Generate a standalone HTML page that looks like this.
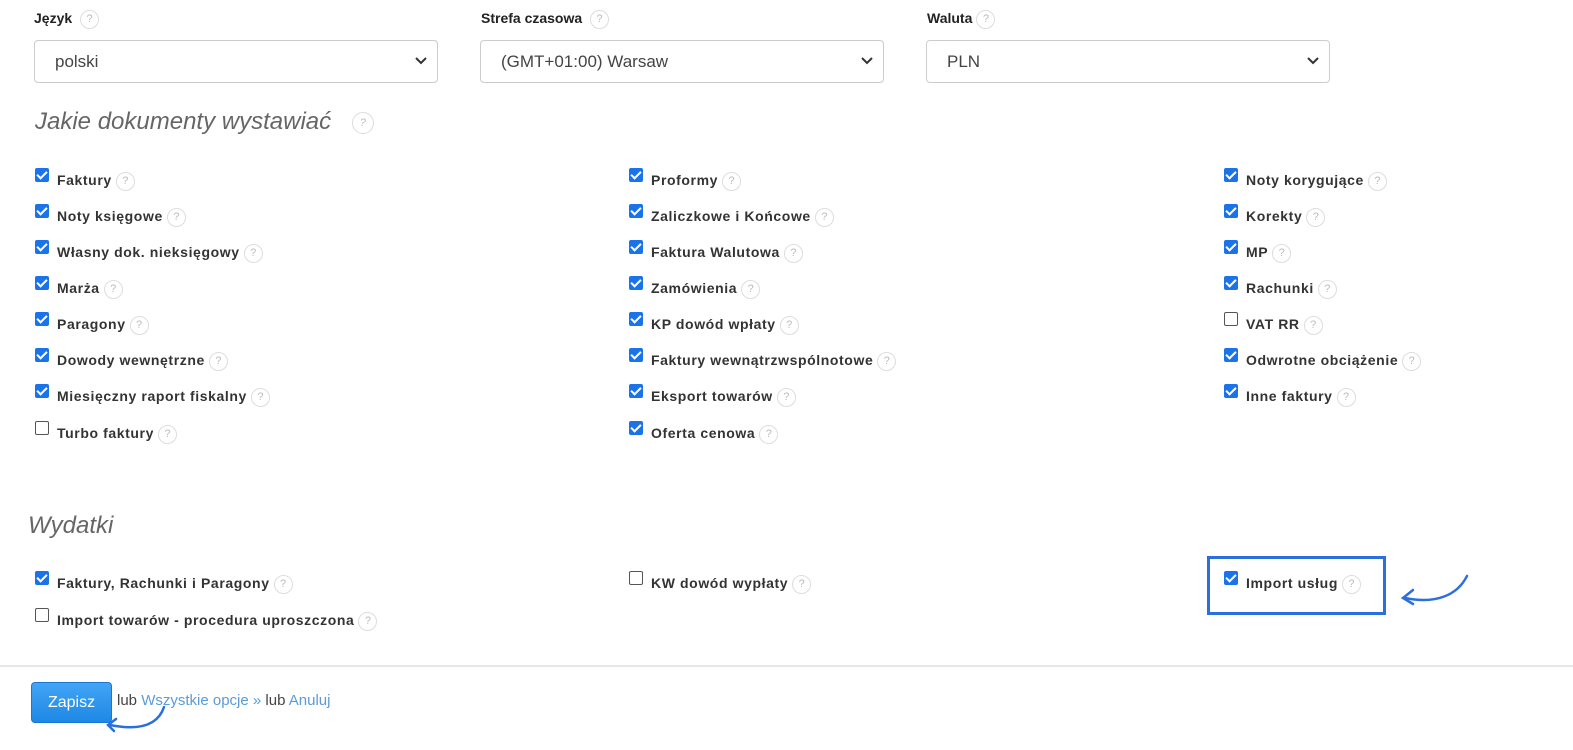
<!DOCTYPE html>
<html><head><meta charset="utf-8"><style>
body{margin:0;width:1573px;height:750px;background:#fff;font-family:"Liberation Sans",Arial,sans-serif;position:relative;overflow:hidden;color:#333}
.a{position:absolute}
.lbl{font-weight:bold;font-size:14px;color:#222}
.sel{position:absolute;top:40px;height:43px;width:404px;border:1px solid #ccc;border-radius:4px;box-sizing:border-box;font-size:17px;color:#444;padding:11px 0 0 20px}
.sel svg{position:absolute;right:10px;top:16px}
.h{font-style:italic;font-size:24px;color:#666}
.q{display:inline-block;width:19px;height:19px;border:1px solid #ddd;border-radius:50%;box-sizing:border-box;font-size:11px;color:#bbb;text-align:center;line-height:17px;font-weight:normal;vertical-align:middle;margin-left:4px;letter-spacing:0}
.cb{position:absolute;font-weight:bold;font-size:14px;color:#333;letter-spacing:0.6px;white-space:nowrap;line-height:20px}
.cb i{display:inline-block;width:14px;height:14px;box-sizing:border-box;border-radius:2px;vertical-align:-1px;margin-right:8px;position:relative;top:-4px}
.cb i.c{background:#1a73e8}
.cb i.c:after{content:"";position:absolute;left:4px;top:1px;width:4px;height:8px;border:solid #fff;border-width:0 2px 2px 0;transform:rotate(45deg)}
.cb i.u{border:1px solid #555;background:#fff}
</style></head><body>
<div class="a lbl" style="left:34px;top:10px">Język <span class="q">?</span></div>
<div class="a lbl" style="left:481px;top:10px">Strefa czasowa <span class="q">?</span></div>
<div class="a lbl" style="left:927px;top:10px">Waluta<span class="q">?</span></div>
<div class="sel" style="left:34px">polski<svg width="12" height="8" viewBox="0 0 12 8"><path d="M1 1l5 5 5-5" fill="none" stroke="#333" stroke-width="2"/></svg></div>
<div class="sel" style="left:480px">(GMT+01:00) Warsaw<svg width="12" height="8" viewBox="0 0 12 8"><path d="M1 1l5 5 5-5" fill="none" stroke="#333" stroke-width="2"/></svg></div>
<div class="sel" style="left:926px">PLN<svg width="12" height="8" viewBox="0 0 12 8"><path d="M1 1l5 5 5-5" fill="none" stroke="#333" stroke-width="2"/></svg></div>
<div class="a h" style="left:35px;top:108px">Jakie dokumenty wystawiać <span class="q" style="margin-left:14px;width:22px;height:22px;line-height:20px">?</span></div>

<div class="cb" style="left:35px;top:170px"><i class="c"></i>Faktury<span class="q">?</span></div>
<div class="cb" style="left:35px;top:206px"><i class="c"></i>Noty księgowe<span class="q">?</span></div>
<div class="cb" style="left:35px;top:242px"><i class="c"></i>Własny dok. nieksięgowy<span class="q">?</span></div>
<div class="cb" style="left:35px;top:278px"><i class="c"></i>Marża<span class="q">?</span></div>
<div class="cb" style="left:35px;top:314px"><i class="c"></i>Paragony<span class="q">?</span></div>
<div class="cb" style="left:35px;top:350px"><i class="c"></i>Dowody wewnętrzne<span class="q">?</span></div>
<div class="cb" style="left:35px;top:386px"><i class="c"></i>Miesięczny raport fiskalny<span class="q">?</span></div>
<div class="cb" style="left:35px;top:423px"><i class="u"></i>Turbo faktury<span class="q">?</span></div>

<div class="cb" style="left:629px;top:170px"><i class="c"></i>Proformy<span class="q">?</span></div>
<div class="cb" style="left:629px;top:206px"><i class="c"></i>Zaliczkowe i Końcowe<span class="q">?</span></div>
<div class="cb" style="left:629px;top:242px"><i class="c"></i>Faktura Walutowa<span class="q">?</span></div>
<div class="cb" style="left:629px;top:278px"><i class="c"></i>Zamówienia<span class="q">?</span></div>
<div class="cb" style="left:629px;top:314px"><i class="c"></i>KP dowód wpłaty<span class="q">?</span></div>
<div class="cb" style="left:629px;top:350px"><i class="c"></i>Faktury wewnątrzwspólnotowe<span class="q">?</span></div>
<div class="cb" style="left:629px;top:386px"><i class="c"></i>Eksport towarów<span class="q">?</span></div>
<div class="cb" style="left:629px;top:423px"><i class="c"></i>Oferta cenowa<span class="q">?</span></div>

<div class="cb" style="left:1224px;top:170px"><i class="c"></i>Noty korygujące<span class="q">?</span></div>
<div class="cb" style="left:1224px;top:206px"><i class="c"></i>Korekty<span class="q">?</span></div>
<div class="cb" style="left:1224px;top:242px"><i class="c"></i>MP<span class="q">?</span></div>
<div class="cb" style="left:1224px;top:278px"><i class="c"></i>Rachunki<span class="q">?</span></div>
<div class="cb" style="left:1224px;top:314px"><i class="u"></i>VAT RR<span class="q">?</span></div>
<div class="cb" style="left:1224px;top:350px"><i class="c"></i>Odwrotne obciążenie<span class="q">?</span></div>
<div class="cb" style="left:1224px;top:386px"><i class="c"></i>Inne faktury<span class="q">?</span></div>

<div class="a h" style="left:28px;top:512px">Wydatki</div>
<div class="cb" style="left:35px;top:573px"><i class="c"></i>Faktury, Rachunki i Paragony<span class="q">?</span></div>
<div class="cb" style="left:35px;top:610px"><i class="u"></i>Import towarów - procedura uproszczona<span class="q">?</span></div>
<div class="cb" style="left:629px;top:573px"><i class="u"></i>KW dowód wypłaty<span class="q">?</span></div>
<div class="cb" style="left:1224px;top:573px"><i class="c"></i>Import usług<span class="q">?</span></div>
<div class="a" style="left:1207px;top:556px;width:179px;height:59px;border:3px solid #2a6fdb;box-sizing:border-box"></div>
<svg class="a" style="left:1395px;top:572px" width="80" height="40" viewBox="0 0 80 40"><path d="M72 4C62 24 40 32 10 26" fill="none" stroke="#2a6fdb" stroke-width="2.5" stroke-linecap="round"/><path d="M18 18L8 26L18 32" fill="none" stroke="#2a6fdb" stroke-width="2.5" stroke-linecap="round"/></svg>

<div class="a" style="left:0;top:665px;width:1573px;height:2px;background:#e6e6e6"></div>
<div class="a" style="left:31px;top:682px;width:81px;height:41px;border-radius:4px;background:linear-gradient(#42a5f5,#1e88e5);border:1px solid #1976d2;box-sizing:border-box;color:#fff;font-size:16px;text-align:center;line-height:39px">Zapisz</div>
<div class="a" style="left:117px;top:692px;font-size:15px;color:#444">lub <span style="color:#5a9bd8">Wszystkie opcje »</span> lub <span style="color:#5a9bd8">Anuluj</span></div>
<svg class="a" style="left:100px;top:705px" width="70" height="30" viewBox="0 0 70 30"><path d="M64 2C58 20 40 26 10 20" fill="none" stroke="#2a6fdb" stroke-width="2.5" stroke-linecap="round"/><path d="M16 14L8 20L14 26" fill="none" stroke="#2a6fdb" stroke-width="2.5" stroke-linecap="round"/></svg>
</body></html>
